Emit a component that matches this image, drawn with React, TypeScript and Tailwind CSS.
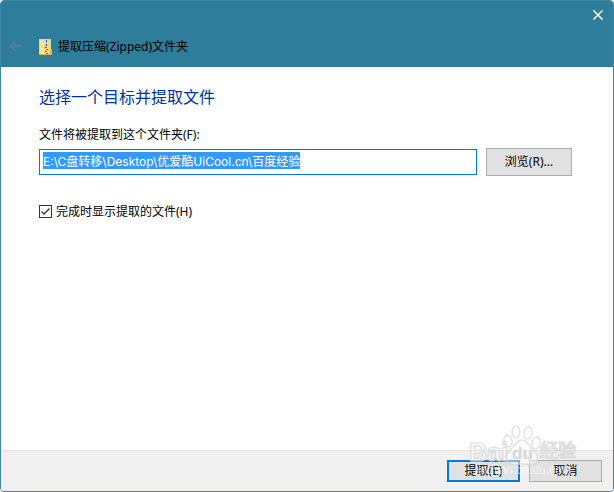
import { useEffect, useRef } from "react";

function BackArrow() {
  return (
    <svg width="13" height="12" viewBox="0 0 13 12" fill="none" stroke="#557f8f" strokeWidth="2" aria-hidden="true">
      <path d="M12.5 5H1.5M6.5 0L1.5 5l5 5" />
    </svg>
  );
}

function ZipFolderIcon() {
  return (
    <svg width="13" height="17" viewBox="0 0 13 17" aria-hidden="true">
      <path d="M0 0h12v10h1v6H0z" fill="#f4d35e" />
      <path d="M1 1h4v14H1z" fill="#fbe58f" />
      <path d="M9 1h2v14H9z" fill="#f8dc78" />
      <path d="M11 10h2v6h-2z" fill="#e3b83f" />
      <path d="M0 15h13v1H0z" fill="#dcb244" />
      <path d="M6 0h3v1h1v6H9v1H6V7H5V1h1z" fill="#d3d6d9" />
      <path d="M7 1h1v2H7zM7 5h1v2H7z" fill="#4c4f52" />
      <path d="M6 8h2v1H6zM7 10h2v1H7zM6 12h2v1H6zM7 14h2v1H7z" fill="#6a6d70" />
      <path d="M8 8h1v2H8zM6 10h1v2H6zM8 12h1v2H8zM6 14h1v2H6z" fill="#dfe2e4" />
    </svg>
  );
}

function Watermark() {
  return (
    <svg
      className="pointer-events-none absolute right-7 bottom-2 font-['Liberation_Sans','Noto_Sans_CJK_SC',sans-serif]"
      width="116"
      height="60"
      viewBox="0 0 116 60"
      aria-hidden="true"
    >
      <g fill="#ffffff" fillOpacity="0.45" stroke="#d8d8d8" strokeOpacity="0.9" strokeWidth="1.2">
        <ellipse cx="47" cy="9" rx="4" ry="6" />
        <ellipse cx="59" cy="10" rx="4" ry="6" transform="rotate(12 59 10)" />
        <ellipse cx="39" cy="18" rx="4" ry="6" transform="rotate(-12 39 18)" />
        <ellipse cx="67" cy="20" rx="4" ry="6" transform="rotate(15 67 20)" />
        <path d="M53 17c5 0 6 4 9 8 4 4 8 7 6 13-2 5-9 3-15 3s-12 2-15-3c-2-6 1-9 5-13 3-4 5-8 10-8z" />
        <text x="0" y="38" fontSize="25" fontWeight="700">Bai</text>
        <text x="71" y="34" fontSize="18" fontWeight="500">经验</text>
      </g>
      <text x="43" y="36" fontSize="17" fontWeight="700" fill="#d6d6d6">du</text>
      <text x="6" y="51" fontSize="12" fill="#ffffff" fillOpacity="0.6">jingyan.baidu.com</text>
    </svg>
  );
}

export default function App() {
  const pathRef = useRef<HTMLInputElement>(null);

  useEffect(() => {
    pathRef.current?.focus();
    pathRef.current?.select();
  }, []);

  return (
    <div className="relative flex min-h-screen flex-col overflow-hidden rounded-sm border border-[#3f86a3] bg-white font-['Noto_Sans','Noto_Sans_CJK_SC',sans-serif] text-xs text-black">
      <header className="bg-[#2e7d9a] pb-3">
        <div className="flex justify-end px-2 pt-[7px]">
          <button type="button" aria-label="关闭" className="flex size-3.5 items-center justify-center">
            <svg width="10" height="10" viewBox="0 0 10 10" fill="none" stroke="#fff" strokeWidth="1.4" aria-hidden="true">
              <path d="M0 0l10 10M10 0L0 10" />
            </svg>
          </button>
        </div>
        <div className="mt-[17px] flex h-4 items-center pl-2">
          <button type="button" aria-label="返回" disabled className="mr-[17px]">
            <BackArrow />
          </button>
          <ZipFolderIcon />
          <h1 className="ml-1.5 leading-4">提取压缩(Zipped)文件夹</h1>
        </div>
      </header>

      <main className="flex-1 pt-5 pr-[41px] pl-[38px]">
        <h2 className="text-base leading-5 text-[#003399]">选择一个目标并提取文件</h2>
        <label htmlFor="path" className="mt-5 block leading-4">
          文件将被提取到这个文件夹(F):
        </label>
        <div className="mt-[5px] flex items-center gap-[9px]">
          <input
            id="path"
            ref={pathRef}
            type="text"
            defaultValue="E:\C盘转移\Desktop\优爱酷UiCool.cn\百度经验"
            className="h-[26px] min-w-0 flex-1 border border-[#0078d7] bg-white px-[3px] pb-1 font-['Inter','Noto_Sans_CJK_SC',sans-serif] leading-4 outline-none selection:bg-[#3399ff] selection:text-white"
          />
          <button type="button" className="h-7 w-[86px] border border-[#adadad] bg-[#e1e1e1]">
            浏览(R)...
          </button>
        </div>
        <div className="mt-7 flex items-center gap-[3px]">
          <span className="relative flex size-3.5">
            <input
              id="show"
              type="checkbox"
              defaultChecked
              className="peer size-[13px] appearance-none border border-[#333333] bg-white"
            />
            <svg
              className="pointer-events-none absolute inset-0 hidden peer-checked:block"
              width="13"
              height="13"
              viewBox="0 0 13 13"
              fill="none"
              stroke="#333333"
              strokeWidth="1.3"
              aria-hidden="true"
            >
              <path d="M2.5 6.5L5 9l5.5-5.5" />
            </svg>
          </span>
          <label htmlFor="show" className="leading-4">
            完成时显示提取的文件(H)
          </label>
        </div>
      </main>

      <footer className="flex justify-end gap-[9px] border-t border-[#dfdfdf] bg-[#f0f0f0] px-[11px] py-[9px]">
        <button type="button" className="h-[22px] w-[73px] border-2 border-[#0078d7] bg-[#e1e1e1] leading-4">
          提取(E)
        </button>
        <button type="button" className="h-[22px] w-[73px] border border-[#adadad] bg-[#e1e1e1] leading-4">
          取消
        </button>
      </footer>
      <Watermark />
    </div>
  );
}
